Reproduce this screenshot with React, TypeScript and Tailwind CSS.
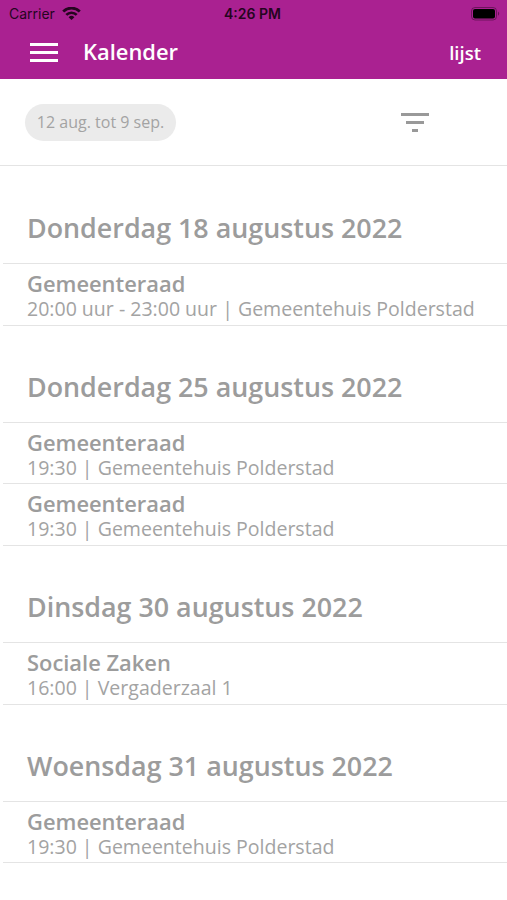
import React from 'react';

interface Meeting {
  title: string;
  details: string;
}

interface Day {
  label: string;
  meetings: Meeting[];
}

const days: Day[] = [
  {
    label: 'Donderdag 18 augustus 2022',
    meetings: [{ title: 'Gemeenteraad', details: '20:00 uur - 23:00 uur | Gemeentehuis Polderstad' }],
  },
  {
    label: 'Donderdag 25 augustus 2022',
    meetings: [
      { title: 'Gemeenteraad', details: '19:30 | Gemeentehuis Polderstad' },
      { title: 'Gemeenteraad', details: '19:30 | Gemeentehuis Polderstad' },
    ],
  },
  {
    label: 'Dinsdag 30 augustus 2022',
    meetings: [{ title: 'Sociale Zaken', details: '16:00 | Vergaderzaal 1' }],
  },
  {
    label: 'Woensdag 31 augustus 2022',
    meetings: [{ title: 'Gemeenteraad', details: '19:30 | Gemeentehuis Polderstad' }],
  },
];

const StatusBar: React.FC = () => (
  <div className="grid h-[27px] grid-cols-3 items-center pr-[7px] pl-[9px] font-[Inter,sans-serif] text-[14px] text-[#25051f]">
    <div className="flex items-center gap-[7px]">
      <span>Carrier</span>
      <svg width="19" height="14" viewBox="0 0 19 14" fill="none" stroke="currentColor" strokeWidth="2.7">
        <path d="M1.2 4.500a11.700 11.700 0 0 1 16.600 0" />
        <path d="M4.300 7.900a7.400 7.400 0 0 1 10.400 0" />
        <path d="M9.500 13 6.600 10.200a4.200 4.200 0 0 1 5.800 0z" fill="currentColor" stroke="none" />
      </svg>
    </div>
    <span className="-ml-1 text-center font-semibold">4:26 PM</span>
    <svg className="justify-self-end" width="29" height="14" viewBox="0 0 29 14">
      <rect x="0.5" y="0.5" width="25" height="12.500" rx="3.500" fill="none" stroke="currentColor" opacity="0.45" />
      <rect x="2" y="2" width="22" height="9.500" rx="2" fill="#000" />
      <path d="M27 4.500c1.600.8 1.600 3.400 0 4.200z" fill="currentColor" opacity="0.5" />
    </svg>
  </div>
);

const DaySection: React.FC<{ day: Day }> = ({ day }) => (
  <section>
    <h2 className="h-[97px] border-b border-[#e4e4e4] pt-[42px] pl-[24px] text-[26.850px] leading-[38px] font-semibold text-[#9c9c9c]">
      {day.label}
    </h2>
    {day.meetings.map((meeting, index) => (
      <div key={index} className="h-[61.700px] border-b border-[#e4e4e4] pt-[6px] pl-[24px]">
        <h3 className="text-[21.900px] leading-[27px] font-semibold text-[#9c9c9c]">{meeting.title}</h3>
        <p className="text-[19.550px] leading-[23px] whitespace-nowrap text-[#a3a3a3]">{meeting.details}</p>
      </div>
    ))}
  </section>
);

const App: React.FC = () => (
  <div className="h-[900px] overflow-hidden bg-white font-['Open_Sans',sans-serif]">
    <header className="h-[79px] bg-[#aa2191]">
      <StatusBar />
      <div className="flex h-[50px] items-center pr-[26px] pl-[30px] text-white">
        <button aria-label="Menu" className="flex w-[28px] flex-col gap-[5px]">
          <span className="h-[3px] w-full bg-white" />
          <span className="h-[3px] w-full bg-white" />
          <span className="h-[3px] w-full bg-white" />
        </button>
        <h1 className="ml-[25px] text-[21.900px] font-semibold">Kalender</h1>
        <button className="mt-[2px] ml-auto text-[18.500px] font-semibold">lijst</button>
      </div>
    </header>

    <div className="flex h-[87px] items-center justify-between border-b border-[#e4e4e4] pr-[78px] pl-[25px]">
      <button className="h-[37px] w-[151px] rounded-full bg-[#ebebeb] text-[16px] text-[#a3a3a3]">12 aug. tot 9 sep.</button>
      <button aria-label="Filter" className="flex w-[28px] flex-col items-center gap-[5px]">
        <span className="h-[3px] w-[28px] bg-[#999]" />
        <span className="h-[3px] w-[18px] bg-[#999]" />
        <span className="h-[3px] w-[6px] bg-[#999]" />
      </button>
    </div>

    <main className="pt-px pl-[3px]">
      {days.map((day) => (
        <DaySection key={day.label} day={day} />
      ))}
    </main>
  </div>
);

export default App;
